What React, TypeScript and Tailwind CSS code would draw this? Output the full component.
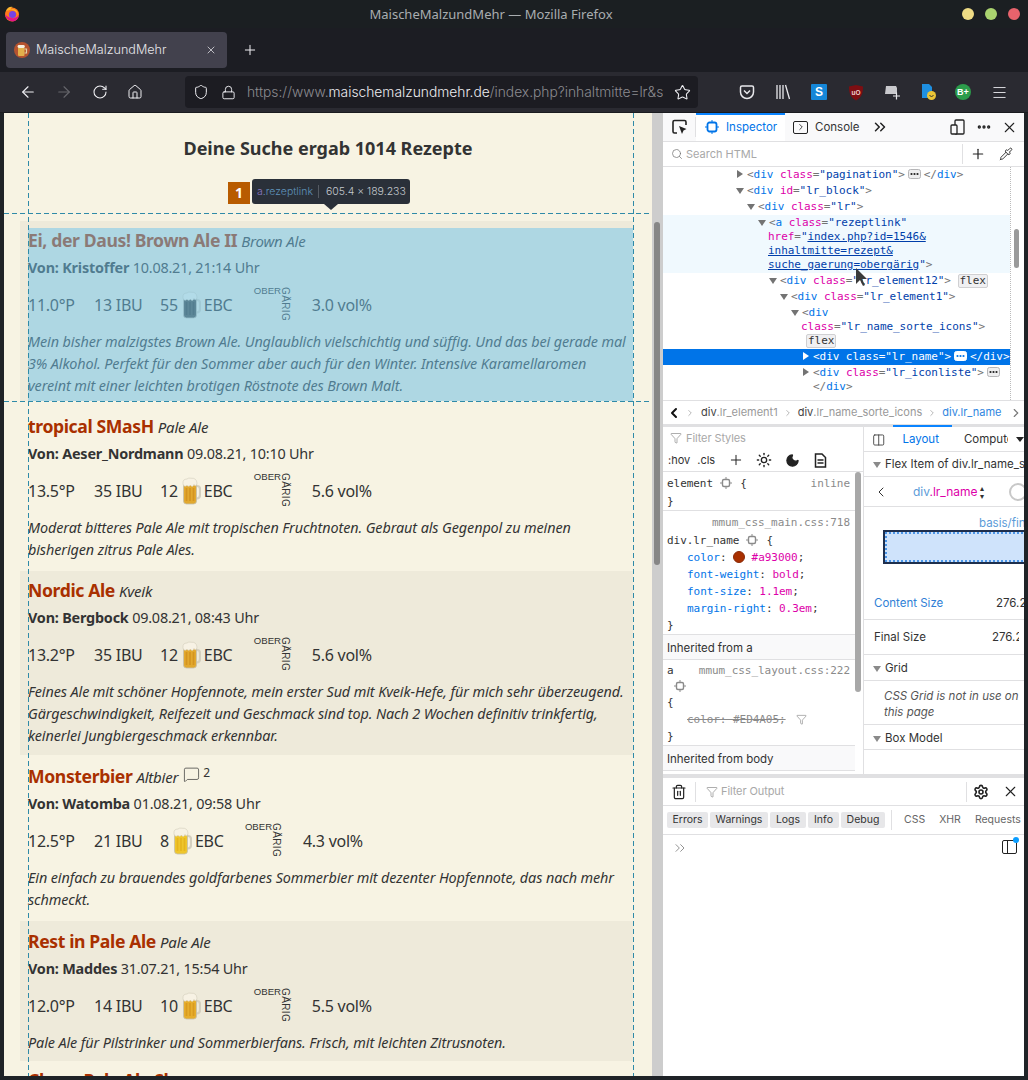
import React from "react";
import {
  ArrowLeft,
  ArrowRight,
  ChevronLeft,
  ChevronRight,
  ChevronsRight,
  Ellipsis,
  House,
  Lock,
  Menu,
  Moon,
  Pipette,
  Plus,
  RotateCw,
  Search,
  Settings,
  Shield,
  Star,
  Sun,
  Trash2,
  Funnel,
  X,
  Columns2,
  MessageSquare,
} from "lucide-react";

const ui = "font-['Inter','Noto_Sans',sans-serif]";
const mono = "font-['DejaVu_Sans_Mono',monospace]";

function FirefoxLogo() {
  return (
    <svg width="16" height="16" viewBox="0 0 16 16">
      <circle cx="8" cy="8.5" r="7" fill="#ff7a1a" />
      <path d="M2 5 Q4 0 9 1 Q6 2 7 4 Q12 4 14 9 Q13 3 9 3 Z" fill="#ffb52e" />
      <circle cx="8.5" cy="8.5" r="3.6" fill="#7542e5" />
      <path d="M1 8 Q2 15 9 15.4 Q14 15 15 9 Q12 13 8 12 Q3 11 1 8Z" fill="#e31587" />
    </svg>
  );
}

function Favicon() {
  return (
    <svg width="16" height="16" viewBox="0 0 16 16">
      <circle cx="8" cy="8" r="8" fill="#b5532f" />
      <rect x="4" y="5" width="6.5" height="9" rx="1" fill="#e3b04b" />
      <rect x="3.6" y="3" width="7.2" height="3" rx="1.4" fill="#f5efe0" />
      <path d="M10.5 7h2v4h-2" fill="none" stroke="#e3d4a8" strokeWidth="1.2" />
    </svg>
  );
}

function Mug({ color, dark }: { color: string; dark: string }) {
  return (
    <svg width="19" height="28" viewBox="0 0 19 28" className="shrink-0">
      <path d="M13 9h2q3 0 3 3v6q0 3-3 3.500h-2" fill="none" stroke="#d4cfbf" strokeWidth="2.200" />
      <path d="M1.500 7h13v17q0 3-3 3h-7q-3 0-3-3Z" fill={color} stroke="#c4bfae" strokeWidth="0.8" />
      <path d="M4.500 11v13M8 11v13M11.500 11v13" stroke={dark} strokeWidth="1.700" opacity="0.55" />
      <path d="M1 6.500Q0.500 2 5 2 6.500 0.500 9 1.200 14.500 0.800 15 6c0 3.500-2.500 3.200-3 1.500-.8 2.500-2.800 2.500-3.500.5-1 1.800-3 1.500-3.500.2C4 10 1 9.500 1 6.500Z" fill="#f7f2e4" stroke="#d2ccbb" strokeWidth="0.6" />
    </svg>
  );
}

function Stat({ plato, ibu, ebc, vol, color, dark }: { plato: string; ibu: string; ebc: string; vol: string; color: string; dark: string }) {
  return (
    <div className="flex items-center h-[28px] text-[16px] tracking-[-0.25px] text-[#333]">
      <span className="w-[66px] whitespace-nowrap">{plato}</span>
      <span className="w-[66px] whitespace-nowrap">{ibu}</span>
      <span className="whitespace-nowrap mr-[4px]">{ebc}</span>
      <Mug color={color} dark={dark} />
      <span className="ml-[3px] w-[50px]">EBC</span>
      <div className="flex items-start w-[58px] h-[34px] -mt-[1px] font-['Liberation_Sans',sans-serif] text-[10px] leading-[12px] tracking-normal">
        <span className="text-[9.6px] -mt-[3px]">OBER</span>
        <span className="[writing-mode:vertical-rl] ml-[-2px] mt-[-1px] tracking-[0.4px]">GÄRIG</span>
      </div>
      <span className="whitespace-nowrap">{vol}</span>
    </div>
  );
}

type Recipe = {
  name: string;
  kind: string;
  comments?: string;
  author?: string;
  date?: string;
  plato?: string;
  ibu?: string;
  ebc?: string;
  vol?: string;
  color?: string;
  dark?: string;
  desc?: string[];
  tint?: boolean;
  box: string;
};

const recipes: Recipe[] = [
  {
    name: "Ei, der Daus! Brown Ale II",
    kind: "Brown Ale",
    author: "Kristoffer",
    date: "10.08.21, 21:14 Uhr",
    plato: "11.0°P",
    ibu: "13 IBU",
    ebc: "55",
    vol: "3.0 vol%",
    color: "#4c4a45",
    dark: "#2b2926",
    desc: [
      "Mein bisher malzigstes Brown Ale. Unglaublich vielschichtig und süffig. Und das bei gerade mal",
      "3% Alkohol. Perfekt für den Sommer aber auch für den Winter. Intensive Karamellaromen",
      "vereint mit einer leichten brotigen Röstnote des Brown Malt.",
    ],
    tint: true,
    box: "mt-[7px] pt-[7px] pb-[4px]",
  },
  {
    name: "tropical SMasH",
    kind: "Pale Ale",
    author: "Aeser_Nordmann",
    date: "09.08.21, 10:10 Uhr",
    plato: "13.5°P",
    ibu: "35 IBU",
    ebc: "12",
    vol: "5.6 vol%",
    color: "#e2a92f",
    dark: "#c98416",
    desc: ["Moderat bitteres Pale Ale mit tropischen Fruchtnoten. Gebraut als Gegenpol zu meinen", "bisherigen zitrus Pale Ales."],
    box: "pt-[13px] pb-[10px]",
  },
  {
    name: "Nordic Ale",
    kind: "Kveik",
    author: "Bergbock",
    date: "09.08.21, 08:43 Uhr",
    plato: "13.2°P",
    ibu: "35 IBU",
    ebc: "12",
    vol: "5.6 vol%",
    color: "#e2a92f",
    dark: "#c98416",
    desc: [
      "Feines Ale mit schöner Hopfennote, mein erster Sud mit Kveik-Hefe, für mich sehr überzeugend.",
      "Gärgeschwindigkeit, Reifezeit und Geschmack sind top. Nach 2 Wochen definitiv trinkfertig,",
      "keinerlei Jungbiergeschmack erkennbar.",
    ],
    tint: true,
    box: "pt-[7px] pb-[8px]",
  },
  {
    name: "Monsterbier",
    kind: "Altbier",
    comments: "2",
    author: "Watomba",
    date: "01.08.21, 09:58 Uhr",
    plato: "12.5°P",
    ibu: "21 IBU",
    ebc: "8",
    vol: "4.3 vol%",
    color: "#efc62c",
    dark: "#e0a814",
    desc: ["Ein einfach zu brauendes goldfarbenes Sommerbier mit dezenter Hopfennote, das nach mehr", "schmeckt."],
    box: "pt-[9px] pb-[10px]",
  },
  {
    name: "Rest in Pale Ale",
    kind: "Pale Ale",
    author: "Maddes",
    date: "31.07.21, 15:54 Uhr",
    plato: "12.0°P",
    ibu: "14 IBU",
    ebc: "10",
    vol: "5.5 vol%",
    color: "#e6ae2d",
    dark: "#cf8c16",
    desc: ["Pale Ale für Pilstrinker und Sommerbierfans. Frisch, mit leichten Zitrusnoten."],
    tint: true,
    box: "pt-[8px] pb-[7px]",
  },
  {
    name: "Chaos Pale Ale Sh",
    kind: "",
    box: "pt-[7px]",
  },
];

function RecipeRow({ r }: { r: Recipe }) {
  return (
    <div className={`ml-[16px] w-[613px] pl-[8px] ${r.tint ? "bg-[#eeeada]" : ""} ${r.box}`}>
      <div className="flex items-baseline h-[24px]">
        <span className="text-[17.6px] leading-[24px] font-bold text-[#a93000] tracking-[-0.38px] whitespace-nowrap">{r.name}</span>
        <span className="ml-[4px] text-[15px] italic text-[#333] tracking-[-0.2px] whitespace-nowrap">{r.kind}</span>
        {r.comments && (
          <span className="ml-[5px] flex items-start self-start mt-[2px] text-[12px] text-[#333]">
            <MessageSquare size={17} strokeWidth={1} />
            <span className="ml-[3px] leading-[14px]">{r.comments}</span>
          </span>
        )}
      </div>
      {r.plato && (
        <>
          <div className="mt-[5px] h-[22px] text-[14.4px] leading-[22px] text-[#333] tracking-[-0.2px] whitespace-nowrap">
            <b>Von: {r.author}</b> {r.date}
          </div>
          <div className="mt-[12px]">
            <Stat plato={r.plato} ibu={r.ibu ?? ""} ebc={r.ebc ?? ""} vol={r.vol ?? ""} color={r.color ?? ""} dark={r.dark ?? ""} />
          </div>
          <div className="mt-[12px] text-[14.4px] leading-[22px] italic text-[#333] tracking-[-0.1px]">
            {r.desc?.map((line) => (
              <div key={line} className="whitespace-nowrap">
                {line}
              </div>
            ))}
          </div>
        </>
      )}
    </div>
  );
}

function Page() {
  return (
    <div className="relative w-[648px] h-full overflow-hidden bg-[#f7f3e3] font-['Noto_Sans',sans-serif]">
      <h1 className="h-[101px] pt-[23px] text-center text-[18px] leading-[24px] font-bold text-[#333]">Deine Suche ergab 1014 Rezepte</h1>
      {recipes.map((r) => (
        <RecipeRow key={r.name} r={r} />
      ))}

      {/* inspector highlight */}
      <div className="absolute left-[24px] top-[115px] w-[605px] h-[173px] bg-[#6ec4ec]/50" />
      <div className="absolute left-[24px] top-0 bottom-0 w-px bg-[repeating-linear-gradient(to_bottom,#2f8aa8_0,#2f8aa8_5px,transparent_5px,transparent_8px)]" />
      <div className="absolute left-[629px] top-0 bottom-0 w-px bg-[repeating-linear-gradient(to_bottom,#2f8aa8_0,#2f8aa8_5px,transparent_5px,transparent_8px)]" />
      <div className="absolute left-0 right-[2px] top-[100px] h-px bg-[repeating-linear-gradient(to_right,#2f8aa8_0,#2f8aa8_5px,transparent_5px,transparent_8px)]" />
      <div className="absolute left-0 right-[2px] top-[288px] h-px bg-[repeating-linear-gradient(to_right,#2f8aa8_0,#2f8aa8_5px,transparent_5px,transparent_8px)]" />
      <div className="absolute left-[224px] top-[69px] w-[22px] h-[22px] bg-[#b85b00] text-white text-[14px] font-bold leading-[22px] text-center">1</div>
      <div className={`absolute left-[248px] top-[66px] w-[158px] h-[25px] rounded-[3px] bg-[#2a3039] flex items-center pl-[5px] text-[10.5px] font-light whitespace-nowrap ${ui}`}>
        <span className="text-[#8d78c4]">a</span>
        <span className="text-[#5f93bb]">.rezeptlink</span>
        <span className="ml-[5px] mr-[7px] w-px h-[13px] bg-[#555b63]" />
        <span className="text-[#c3c8cd]">605.4 × 189.233</span>
      </div>
      <div className="absolute left-[320px] top-[91px] w-0 h-0 border-x-[7px] border-x-transparent border-t-[6px] border-t-[#2a3039]" />
    </div>
  );
}

const Tag = ({ children }: { children: React.ReactNode }) => <span className="text-[#0074e8]">{children}</span>;
const Name = ({ children }: { children: React.ReactNode }) => <span className="text-[#dd00a9]">{children}</span>;
const Val = ({ children }: { children: React.ReactNode }) => <span className="text-[#003eaa]">{children}</span>;
const P = ({ children }: { children: React.ReactNode }) => <span className="text-[#737373]">{children}</span>;
const Dots = ({ light }: { light?: boolean }) => (
  <svg width="13" height="10" viewBox="0 0 13 10" className="inline-block align-[-1px] mx-[3px]">
    <rect x="0.5" y="0.5" width="12" height="9" rx="2" fill={light ? "#fff" : "#eeeeef"} stroke={light ? "#fff" : "#b5b5b7"} />
    <circle cx="3.5" cy="5" r="1.1" fill={light ? "#0074e8" : "#222"} />
    <circle cx="6.5" cy="5" r="1.1" fill={light ? "#0074e8" : "#222"} />
    <circle cx="9.5" cy="5" r="1.1" fill={light ? "#0074e8" : "#222"} />
  </svg>
);
const Badge = ({ children }: { children: React.ReactNode }) => (
  <span className="inline-block h-[14px] leading-[12px] px-[1px] rounded-[2px] border border-[#d0d0d2] bg-[#f0f0f2] text-[#333] text-[11px]">{children}</span>
);
const Down = ({ x }: { x: string }) => <span className={`absolute ${x} top-[5px] w-0 h-0 border-x-[4px] border-x-transparent border-t-[6px] border-t-[#737373]`} />;
const Right = ({ x, light }: { x: string; light?: boolean }) => (
  <span className={`absolute ${x} top-[3px] w-0 h-0 border-y-[4px] border-y-transparent border-l-[6px] ${light ? "border-l-white" : "border-l-[#737373]"}`} />
);

function MLine({ pad, children, className = "" }: { pad: string; children: React.ReactNode; className?: string }) {
  return <div className={`relative py-px leading-[14px] whitespace-nowrap ${pad} ${className}`}>{children}</div>;
}

function Markup() {
  return (
    <div className={`relative h-[233px] shrink-0 overflow-hidden ${mono} text-[11px] tracking-[-0.05px]`}>
      <div className="mr-[13px] border-r border-dotted border-[#bbb] h-full overflow-hidden">
        <MLine pad="pl-[84px]">
          <Right x="left-[74px]" />
          <P>&lt;</P>
          <Tag>div</Tag> <Name>class</Name>
          <P>=</P>
          <Val>"pagination"</Val>
          <P>&gt;</P>
          <Dots />
          <P>&lt;/</P>
          <Tag>div</Tag>
          <P>&gt;</P>
        </MLine>
        <MLine pad="pl-[84px]">
          <Down x="left-[73px]" />
          <P>&lt;</P>
          <Tag>div</Tag> <Name>id</Name>
          <P>=</P>
          <Val>"lr_block"</Val>
          <P>&gt;</P>
        </MLine>
        <MLine pad="pl-[95px]">
          <Down x="left-[84px]" />
          <P>&lt;</P>
          <Tag>div</Tag> <Name>class</Name>
          <P>=</P>
          <Val>"lr"</Val>
          <P>&gt;</P>
        </MLine>
        <div className="bg-[#f0f9fe]">
          <MLine pad="pl-[106px]" className="!pb-0">
            <Down x="left-[95px]" />
            <P>&lt;</P>
            <Tag>a</Tag> <Name>class</Name>
            <P>=</P>
            <Val>"rezeptlink"</Val>
          </MLine>
          <div className="pl-[105px] leading-[14px] whitespace-nowrap pb-[1px]">
            <div>
              <Name>href</Name>
              <P>=</P>
              <Val>
                "<u>index.php?id=1546&amp;</u>
              </Val>
            </div>
            <div>
              <Val>
                <u>inhaltmitte=rezept&amp;</u>
              </Val>
            </div>
            <div>
              <Val>
                <u>suche_gaerung=obergärig</u>"
              </Val>
              <P>&gt;</P>
            </div>
          </div>
        </div>
        <MLine pad="pl-[117px]">
          <Down x="left-[106px]" />
          <P>&lt;</P>
          <Tag>div</Tag> <Name>class</Name>
          <P>=</P>
          <Val>"lr_element12"</Val>
          <P>&gt;</P> <Badge>flex</Badge>
        </MLine>
        <MLine pad="pl-[128px]">
          <Down x="left-[117px]" />
          <P>&lt;</P>
          <Tag>div</Tag> <Name>class</Name>
          <P>=</P>
          <Val>"lr_element1"</Val>
          <P>&gt;</P>
        </MLine>
        <MLine pad="pl-[139px]" className="!pb-0">
          <Down x="left-[128px]" />
          <P>&lt;</P>
          <Tag>div</Tag>
        </MLine>
        <div className="pl-[138px] leading-[14px] whitespace-nowrap">
          <Name>class</Name>
          <P>=</P>
          <Val>"lr_name_sorte_icons"</Val>
          <P>&gt;</P>
        </div>
        <div className="pl-[143px] leading-[14px] pb-[1px]">
          <Badge>flex</Badge>
        </div>
        <MLine pad="pl-[150px]" className="bg-[#0074e8] text-white h-[16px]">
          <Right x="left-[140px]" light />
          &lt;div class="lr_name"&gt;
          <Dots light />
          &lt;/div&gt;
        </MLine>
        <MLine pad="pl-[150px]" className="!pb-0">
          <Right x="left-[140px]" />
          <P>&lt;</P>
          <Tag>div</Tag> <Name>class</Name>
          <P>=</P>
          <Val>"lr_iconliste"</Val>
          <P>&gt;</P>
          <Dots />
        </MLine>
        <div className="pl-[150px] leading-[14px]">
          <P>&lt;/</P>
          <Tag>div</Tag>
          <P>&gt;</P>
        </div>
      </div>
      <div className="absolute right-[5px] top-[62px] w-[5px] h-[39px] rounded-full bg-[#9a9a9a]" />
      <svg width="14" height="20" viewBox="0 0 14 20" className="absolute left-[192px] top-[100px]">
        <path d="M1 1v16l4-4 3 6 2-1-3-6h5Z" fill="#3a3a3a" />
      </svg>
    </div>
  );
}

function Targeting({ size = 12 }: { size?: number }) {
  return (
    <svg width={size} height={size} viewBox="0 0 12 12" className="inline-block align-[-2px]" fill="none" stroke="#8a8a8a">
      <rect x="2.500" y="2.500" width="7" height="7" rx="1.500" strokeWidth="1.400" />
      <path d="M6 0v2.500M6 9.500V12M0 6h2.500M9.500 6H12" strokeWidth="1" />
    </svg>
  );
}

function RulesPane() {
  return (
    <div className="relative w-[201px] shrink-0 h-full border-r border-[#e0e0e2] overflow-hidden">
      <div className={`h-[22px] flex items-center pl-[7px] text-[11px] tracking-[-0.1px] text-[#a8a8a8] ${ui}`}>
        <Funnel size={12} strokeWidth={1.2} className="text-[#777] mr-[4px]" />
        Filter Styles
      </div>
      <div className={`h-[23px] flex items-center pl-[5px] border-b border-[#e0e0e2] text-[11px] text-[#333] ${ui}`}>
        <span>:hov</span>
        <span className="ml-[7px]">.cls</span>
        <Plus size={16} strokeWidth={1.500} className="ml-[13px] text-[#222]" />
        <Sun size={16} strokeWidth={2} className="ml-[12px] text-[#222]" />
        <Moon size={15} strokeWidth={2} fill="#222" className="ml-[13px] text-[#222]" />
        <svg width="13" height="15" viewBox="0 0 13 15" className="ml-[14px]" fill="none" stroke="#222" strokeWidth="1.500">
          <path d="M1.500 1h6.500l3.500 3.500V14H1.500Z" />
          <path d="M3.500 7h6M3.500 10h6" />
        </svg>
      </div>
      <div className={`${mono} w-[192px] text-[11px] leading-[17px] tracking-[-0.05px] text-[#333]`}>
        <div className="px-[4px] pt-[3px] h-[39px] border-b border-[#e0e0e2]">
          <div className="flex justify-between pr-[1px]">
            <span>
              element <Targeting /> <span className="ml-[2px]">{"{"}</span>
            </span>
            <span className="text-[#8a8a8a]">inline</span>
          </div>
          <div className="mt-[1px]">{"}"}</div>
        </div>
        <div className="px-[4px] pt-[3px] h-[124px] border-b border-[#e0e0e2]">
          <div className="text-right text-[#8a8a8a] pr-[1px]">mmum_css_main.css:718</div>
          <div className="mt-[1px]">
            div.lr_name <Targeting /> <span className="ml-[2px]">{"{"}</span>
          </div>
          <div className="pl-[20px]">
            <span className="text-[#0074e8]">color</span>:{" "}
            <span className="inline-block w-[12px] h-[12px] rounded-full bg-[#a93000] align-[-2px] border border-[#8a2a08]" /> <span className="text-[#dd00a9]">#a93000</span>;
          </div>
          <div className="pl-[20px]">
            <span className="text-[#0074e8]">font-weight</span>: <span className="text-[#dd00a9]">bold</span>;
          </div>
          <div className="pl-[20px]">
            <span className="text-[#0074e8]">font-size</span>: <span className="text-[#dd00a9]">1.1em</span>;
          </div>
          <div className="pl-[20px]">
            <span className="text-[#0074e8]">margin-right</span>: <span className="text-[#dd00a9]">0.3em</span>;
          </div>
          <div>{"}"}</div>
        </div>
        <div className={`h-[25px] px-[4px] leading-[26px] bg-[#f9f9fa] border-b border-[#e0e0e2] text-[11.500px] ${ui}`}>Inherited from a</div>
        <div className="px-[4px] pt-[2px] h-[86px] border-b border-[#e0e0e2]">
          <div className="flex justify-between pr-[1px]">
            <span>a</span>
            <span className="text-[#8a8a8a]">mmum_css_layout.css:222</span>
          </div>
          <div className="pl-[7px] h-[15px] leading-[15px]">
            <Targeting />
          </div>
          <div>{"{"}</div>
          <div className="pl-[20px] flex items-center">
            <span className="line-through text-[#8a8a8a]">color: #ED4A05;</span>
            <Funnel size={11} strokeWidth={1} className="ml-[10px] text-[#555]" />
          </div>
          <div>{"}"}</div>
        </div>
        <div className={`h-[25px] px-[4px] leading-[26px] bg-[#f9f9fa] border-b border-[#e0e0e2] text-[11.500px] ${ui}`}>Inherited from body</div>
      </div>
      <div className="absolute right-[2px] top-[45px] w-[6px] h-[220px] rounded-full bg-[#a8a8a8]" />
    </div>
  );
}

function LayoutPane() {
  return (
    <div className={`flex-1 min-w-0 h-full overflow-hidden text-[11.500px] text-[#333] whitespace-nowrap ${ui}`}>
      <div className="h-[25px] flex items-center pt-[1px] border-b border-[#e0e0e2]">
        <Columns2 size={14} strokeWidth={1.500} className="ml-[8px] text-[#333]" />
        <span className="ml-[17px] text-[#0074e8]">Layout</span>
        <span className="ml-[25px] w-[46px] overflow-hidden">Computed</span>
        <span className="ml-[8px] w-0 h-0 border-x-[4px] border-x-transparent border-t-[5px] border-t-[#222]" />
      </div>
      <div className="h-[25px] flex items-center pt-[1px] border-b border-[#e0e0e2] pl-[9px]">
        <span className="w-0 h-0 border-x-[4px] border-x-transparent border-t-[6px] border-t-[#8a8a8a] mr-[4px]" />
        <span>Flex Item of div.lr_name_sorte</span>
      </div>
      <div className="h-[30px] flex items-center border-b border-[#e0e0e2] relative">
        <ChevronLeft size={16} strokeWidth={1.500} className="ml-[9px]" />
        <span className="ml-[24px] text-[12px]">
          <span className="text-[#5b9bd8]">div</span>
          <span className="text-[#dd00a9]">.lr_name</span>
        </span>
        <span className="ml-[2px] text-[8px] leading-[8px] text-center">
          ▴
          <br />▾
        </span>
        <span className="absolute left-[145px] w-[18px] h-[18px] rounded-full border-2 border-[#c8c8c8]" />
      </div>
      <div className="h-[113px] relative border-b border-[#e0e0e2]">
        <div className="absolute left-[115px] top-[8px] text-[#5b9bd8]">basis/final</div>
        <div className="absolute left-[19px] top-[23px] w-[170px] h-[34px] border-2 border-[#1f2f4d] bg-[#cfe3fb]">
          <div className="w-full h-full border-2 border-dotted border-[#4a95e8]" />
        </div>
        <div className="absolute left-[10px] top-[88px] text-[#2f7fd6]">Content Size</div>
        <div className="absolute left-[132px] top-[88px]">276.2</div>
      </div>
      <div className="h-[35px] flex items-center justify-between pt-[2px] border-b border-[#e0e0e2] pl-[10px]">
        <span>Final Size</span>
        <span className="mr-[5px] w-[27px] overflow-hidden">276.2</span>
      </div>
      <div className="h-[26px] flex items-center pt-[3px] border-b border-[#e0e0e2] pl-[9px]">
        <span className="w-0 h-0 border-x-[4px] border-x-transparent border-t-[6px] border-t-[#8a8a8a] mr-[4px]" />
        Grid
      </div>
      <div className="h-[44px] pl-[20px] pt-[7px] leading-[16px] italic text-[#555] border-b border-[#e0e0e2]">
        CSS Grid is not in use on
        <br />
        this page
      </div>
      <div className="h-[25px] flex items-center pt-[3px] border-b border-[#e0e0e2] pl-[9px]">
        <span className="w-0 h-0 border-x-[4px] border-x-transparent border-t-[6px] border-t-[#8a8a8a] mr-[4px]" />
        Box Model
      </div>
    </div>
  );
}

function ConsolePane() {
  const levels = [
    { label: "Errors", w: "w-[41px]" },
    { label: "Warnings", w: "w-[58px]" },
    { label: "Logs", w: "w-[36px]" },
    { label: "Info", w: "w-[31px]" },
    { label: "Debug", w: "w-[44px]" },
  ];
  return (
    <div className={`flex-1 min-h-0 ${ui} text-[11px] text-[#333]`}>
      <div className="h-[28px] flex items-center border-b border-[#e0e0e2] whitespace-nowrap">
        <Trash2 size={16} strokeWidth={1.800} className="ml-[8px] text-[#222]" />
        <span className="ml-[8px] w-px h-[20px] bg-[#e0e0e2]" />
        <Funnel size={12} strokeWidth={1.200} className="ml-[10px] text-[#777]" />
        <span className="ml-[3px] w-[64px] text-[#a8a8a8] tracking-[-0.1px]">Filter Output</span>
        <span className="ml-[181px] w-px h-[20px] bg-[#e0e0e2]" />
        <Settings size={16} strokeWidth={2.400} className="ml-[6px] text-[#222]" />
        <X size={17} strokeWidth={1.500} className="ml-[13px] text-[#222]" />
      </div>
      <div className="h-[29px] flex items-center border-b border-[#e0e0e2] pl-[4px] whitespace-nowrap text-[10.500px]">
        {levels.map((l) => (
          <span key={l.label} className={`h-[16px] leading-[16px] text-center mr-[2px] bg-[#e7e7e9] rounded-[2px] ${l.w}`}>
            {l.label}
          </span>
        ))}
        <span className="ml-[4px] w-px h-[20px] bg-[#e0e0e2]" />
        <span className="ml-[12px] text-[#666]">CSS</span>
        <span className="ml-[14px] text-[#666]">XHR</span>
        <span className="ml-[14px] text-[#666]">Requests</span>
      </div>
      <div className="relative h-[26px] flex items-center">
        <ChevronsRight size={16} strokeWidth={1.200} className="ml-[9px] text-[#777]" />
        <div className="absolute left-[339px] top-[5px] w-[15px] h-[14px] rounded-[2px] border-[1.500px] border-[#222]">
          <div className="w-[5px] h-full border-r border-[#222]" />
        </div>
        <div className="absolute left-[350px] top-[2px] w-[6px] h-[6px] rounded-full bg-[#0a9dff]" />
      </div>
    </div>
  );
}

function DevTools() {
  return (
    <div className="w-[361px] h-full bg-white flex flex-col overflow-hidden">
      <div className={`h-[29px] shrink-0 flex items-center bg-[#f9f9fa] border-b border-[#e0e0e2] text-[11.500px] ${ui}`}>
        <svg width="16" height="16" viewBox="0 0 16 16" className="ml-[9px]" fill="none" stroke="#222" strokeWidth="1.600">
          <path d="M5 14H2.500Q1 14 1 12.500V3Q1 1.500 2.500 1.500h10Q14 1.500 14 3v3" />
          <path d="M7 7l7.500 3-3 1.500L10 15Z" fill="#222" stroke="none" />
        </svg>
        <span className="ml-[7px] w-px h-[20px] bg-[#e0e0e2]" />
        <div className="relative h-full w-[89px] flex items-center bg-white pl-[9px] text-[#0074e8]">
          <span className="absolute left-0 right-0 top-0 h-[2px] bg-[#0a84ff]" />
          <svg width="14" height="14" viewBox="0 0 14 14" fill="none" stroke="#0074e8">
            <rect x="2.500" y="2.500" width="9" height="9" rx="2" strokeWidth="1.800" />
            <path d="M7 0v2M7 12v2M0 7h2M12 7h2" />
          </svg>
          <span className="ml-[7px] pt-[2px]">Inspector</span>
        </div>
        <span className="ml-[8px] w-[15px] h-[13px] rounded-[2px] border-[1.500px] border-[#222] flex items-center justify-center text-[#222]">
          <ChevronRight size={10} strokeWidth={2} />
        </span>
        <span className="ml-[7px] pt-[2px] text-[#333]">Console</span>
        <ChevronsRight size={18} strokeWidth={2} className="ml-[11px] text-[#222]" />
        <svg width="15" height="16" viewBox="0 0 15 16" className="ml-[61px]" fill="none" stroke="#222" strokeWidth="1.300">
          <rect x="5" y="1" width="9" height="14" rx="1" />
          <rect x="1" y="6" width="6" height="9" rx="1" fill="#f9f9fa" />
        </svg>
        <Ellipsis size={16} strokeWidth={3} className="ml-[11px] text-[#222]" />
        <X size={17} strokeWidth={1.500} className="ml-[9px] text-[#222]" />
      </div>
      <div className={`h-[25px] shrink-0 flex items-center border-b border-[#e0e0e2] text-[11px] text-[#a8a8a8] whitespace-nowrap ${ui}`}>
        <Search size={12} strokeWidth={1.500} className="ml-[8px] text-[#777] mr-[3px]" />
        <span className="w-[67px] pt-[1px]">Search HTML</span>
        <span className="ml-[209px] w-px h-[20px] bg-[#e0e0e2]" />
        <Plus size={16} strokeWidth={1.800} className="ml-[7px] text-[#222]" />
        <Pipette size={14} strokeWidth={1.500} className="ml-[13px] text-[#222]" />
      </div>
      <Markup />
      <div className={`h-[24px] shrink-0 flex items-center border-t border-[#e0e0e2] text-[11px] whitespace-nowrap ${ui}`}>
        <ChevronLeft size={16} strokeWidth={3} className="ml-[3px] text-[#111]" />
        <ChevronRight size={10} className="ml-[3px] text-[#aaa]" />
        <span className="ml-[6px] text-[#444]">div</span>
        <span className="text-[#999]">.lr_element1</span>
        <ChevronRight size={10} className="mx-[5px] text-[#aaa]" />
        <span className="text-[#444]">div</span>
        <span className="text-[#999]">.lr_name_sorte_icons</span>
        <ChevronRight size={10} className="mx-[5px] text-[#aaa]" />
        <span className="text-[#2f86e0]">div.lr_name</span>
        <ChevronRight size={14} strokeWidth={2} className="ml-[8px] text-[#777]" />
      </div>
      <div className="h-[3px] shrink-0 bg-[#e0e0e2] relative">
        <div className="absolute left-[230px] w-[59px] top-[1px] h-[2px] bg-[#0a84ff]" />
      </div>
      <div className="h-[347px] shrink-0 flex">
        <RulesPane />
        <LayoutPane />
      </div>
      <div className="h-[4px] shrink-0 bg-[#e0e0e2]" />
      <ConsolePane />
    </div>
  );
}

function Extensions() {
  return (
    <div className="flex items-center">
      <svg width="16" height="16" viewBox="0 0 16 16" fill="none" stroke="#e8e8ec" strokeWidth="1.500">
        <path d="M1.500 3.500Q1.500 2 3 2h10q1.500 0 1.500 1.500V8a6.500 6.500 0 0 1-13 0Z" />
        <path d="M5 6.500l3 3 3-3" />
      </svg>
      <svg width="16" height="16" viewBox="0 0 16 16" className="ml-[20px]" fill="none" stroke="#e8e8ec" strokeWidth="1.300">
        <path d="M2 1v14M5 1v14M8 1v14M10.500 1l4 14" />
      </svg>
      <div className="ml-[20px] w-[16px] h-[16px] bg-[#1587d8] rounded-[1px] text-white text-center text-[12px] font-bold leading-[16px] font-['Liberation_Sans',sans-serif]">S</div>
      <svg width="16" height="17" viewBox="0 0 16 17" className="ml-[21px]">
        <path d="M1 2.500 8 1l7 1.500c0 7-1.500 11-7 14-5.500-3-7-7-7-14Z" fill="#7d0e12" />
        <text x="8" y="10.500" textAnchor="middle" fontSize="6.500" fontWeight="700" fill="#f0d0d0" fontFamily="Liberation Sans">uO</text>
      </svg>
      <svg width="17" height="16" viewBox="0 0 17 16" className="ml-[20px]">
        <path d="M2 2h10l1 2v6H1Z" fill="#c9c9cd" />
        <path d="M9 12h7M12.500 8.500v7" stroke="#e8e8ec" strokeWidth="1.200" />
      </svg>
      <svg width="17" height="18" viewBox="0 0 17 18" className="ml-[19px]">
        <path d="M2 1h7l3 3v11H2Z" fill="#1e8fe0" />
        <circle cx="11.500" cy="12.500" r="4.500" fill="#e9c436" />
        <path d="M9.500 12l2 2 2-2" stroke="#333" fill="none" />
      </svg>
      <div className="ml-[18px] w-[16px] h-[16px] rounded-full bg-[#2c9c4b] text-white text-center text-[9px] font-bold leading-[16px] font-['Liberation_Sans',sans-serif]">B+</div>
      <Menu size={17} strokeWidth={1.300} className="ml-[20px] text-[#e8e8ec]" />
    </div>
  );
}

export default function App() {
  return (
    <div className={`w-[1028px] h-[1080px] overflow-hidden bg-[#1f2327] flex flex-col ${ui}`}>
      <div className="relative h-[28px] shrink-0 flex items-center bg-[#1b1f22]">
        <div className="ml-[4px]">
          <FirefoxLogo />
        </div>
        <div className="flex-1 text-center text-[13px] pt-[1px] text-[#a9adb0] font-['Noto_Sans',sans-serif]">MaischeMalzundMehr — Mozilla Firefox</div>
        <div className="flex items-center gap-[11px] pr-[8px]">
          <span className="w-[12px] h-[12px] rounded-full bg-[#efdc85]" />
          <span className="w-[12px] h-[12px] rounded-full bg-[#aad36f]" />
          <span className="w-[12px] h-[12px] rounded-full bg-[#e8636c]" />
        </div>
      </div>
      <div className="h-[44px] shrink-0 flex items-center bg-[#1c1d23]">
        <div className="ml-[6px] w-[221px] h-[36px] bg-[#42414d] rounded-[4px] flex items-center pl-[8px] text-[12.600px] text-[#e6e6ea]">
          <Favicon />
          <span className="ml-[6px] pt-[1px] w-[169px] font-light">MaischeMalzundMehr</span>
          <X size={12} strokeWidth={1.500} className="text-[#e6e6ea]" />
        </div>
        <Plus size={16} strokeWidth={1.500} className="ml-[15px] text-[#f0f0f4]" />
      </div>
      <div className="h-[41px] shrink-0 flex items-center bg-[#2a2a31] border-b border-[#1a1b1f]">
        <ArrowLeft size={18} strokeWidth={1.500} className="ml-[19px] text-[#f0f0f4]" />
        <ArrowRight size={18} strokeWidth={1.500} className="ml-[18px] text-[#66666c]" />
        <RotateCw size={16} strokeWidth={1.600} className="ml-[19px] text-[#f0f0f4]" />
        <House size={16} strokeWidth={1.500} className="ml-[19px] text-[#f0f0f4]" />
        <div className="ml-[42px] w-[513px] h-[32px] bg-[#1c1c22] rounded-[4px] flex items-center pl-[8px] text-[13.800px] font-light text-[#8b8b90] whitespace-nowrap">
          <Shield size={16} strokeWidth={1.500} className="shrink-0 text-[#f0f0f4]" />
          <Lock size={15} strokeWidth={1.500} className="shrink-0 ml-[12px] text-[#f0f0f4]" />
          <span className="ml-[11px] w-[416px] overflow-hidden">
            https://www.<span className="text-[#ececf0]">maischemalzundmehr.de</span>/index.php?inhaltmitte=lr&amp;s
          </span>
          <Star size={17} strokeWidth={1.500} className="shrink-0 ml-[11px] text-[#f0f0f4]" />
        </div>
        <div className="ml-[41px]">
          <Extensions />
        </div>
      </div>
      <div className="h-[963px] shrink-0 flex pl-[4px]">
        <Page />
        <div className="relative w-[11px] h-full bg-[#cdcdcd] shrink-0">
          <div className="absolute left-[2px] top-[109px] w-[6px] h-[343px] rounded-full bg-[#868686]" />
        </div>
        <DevTools />
      </div>
    </div>
  );
}
